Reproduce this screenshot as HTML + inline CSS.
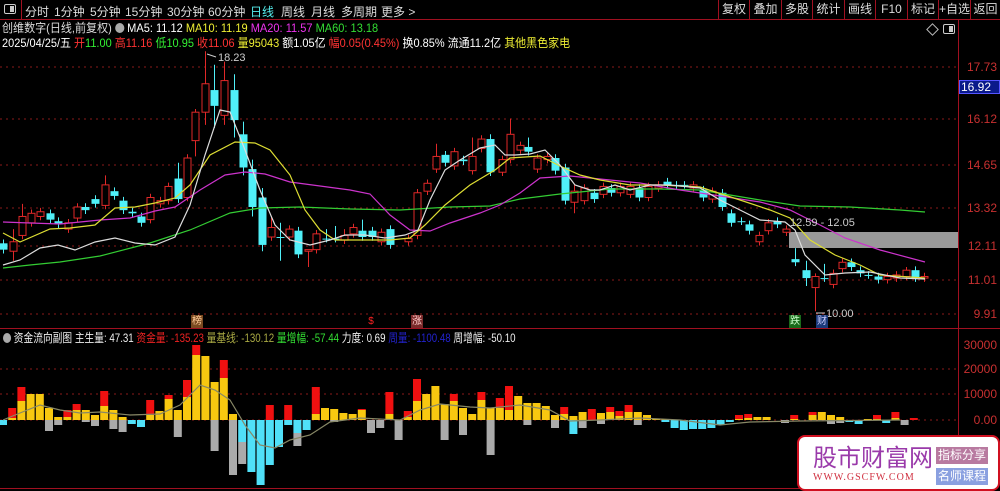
<!DOCTYPE html>
<html><head><meta charset="utf-8"><style>
*{margin:0;padding:0;box-sizing:border-box}
body{width:1000px;height:491px;background:#000;overflow:hidden;position:relative;font-family:"Liberation Sans","Noto Sans CJK SC",sans-serif;font-size:12px;color:#ddd}
.a{position:absolute;white-space:nowrap}
.tb span{position:absolute;top:3px;color:#ddd}
.btn{position:absolute;top:0;height:19px;border-left:1px solid #a01020;color:#ddd;text-align:center;line-height:19px;font-size:12px}
.ax{position:absolute;right:3px;color:#c83030;font-size:12px}
.mk{position:absolute;width:12px;height:13px;font-size:10px;line-height:13px;text-align:center;top:315px}
</style></head><body>
<div class="a" style="left:0;top:19px;width:1000px;height:1px;background:#a01020"></div>
<div class="a" style="left:21px;top:0;width:1px;height:19px;background:#a01020"></div>
<div class="a" style="left:4px;top:4px;width:12px;height:10px;border:1px solid #ccc;border-radius:2px"><div style="position:absolute;right:1px;top:1px;width:4px;height:6px;background:#ccc"></div></div>
<div class="tb">
<span style="left:25px">分时</span><span style="left:54px">1分钟</span><span style="left:90px">5分钟</span><span style="left:125px">15分钟</span><span style="left:167px">30分钟</span><span style="left:208px">60分钟</span><span style="left:250px;color:#5ee">日线</span><span style="left:281px">周线</span><span style="left:311px">月线</span><span style="left:341px">多周期</span><span style="left:381px">更多 &gt;</span>
</div>
<div class="btn" style="left:718px;width:31px">复权</div><div class="btn" style="left:749px;width:32px">叠加</div><div class="btn" style="left:781px;width:31px">多股</div><div class="btn" style="left:812px;width:32px">统计</div><div class="btn" style="left:844px;width:31px">画线</div><div class="btn" style="left:875px;width:32px">F10</div><div class="btn" style="left:907px;width:31px">标记</div><div class="btn" style="left:938px;width:32px">+自选</div><div class="btn" style="left:970px;width:30px">返回</div>

<div class="a" style="left:2px;top:19px;transform:scaleX(0.92);transform-origin:0 0">创维数字(日线,前复权) <span style="display:inline-block;width:10px;height:10px;border-radius:5px;background:#aaa;vertical-align:-1px"></span> <span style="color:#fff">MA5: 11.12</span> <span style="color:#ee3">MA10: 11.19</span> <span style="color:#e3e">MA20: 11.57</span> <span style="color:#3d3">MA60: 13.18</span></div>
<div class="a" style="left:2px;top:34px;color:#fff;transform:scaleX(0.915);transform-origin:0 0">2025/04/25/五 <span style="color:#f33">开</span><span style="color:#3e3">11.00</span> <span style="color:#f33">高11.16</span> <span style="color:#3e3">低10.95</span> <span style="color:#f33">收11.06</span> <span style="color:#ee3">量95043</span> 额1.05亿 <span style="color:#f33">幅0.05(0.45%)</span> 换0.85% 流通11.2亿 <span style="color:#ee3">其他黑色家电</span></div>
<div class="a" style="left:928px;top:25px;width:9px;height:9px;border:1px solid #bbb;transform:rotate(45deg)"></div>
<div class="a" style="left:943px;top:24px;width:12px;height:10px;border:1px solid #ccc;border-radius:2px"><div style="position:absolute;right:1px;top:1px;width:4px;height:6px;background:#ccc"></div></div>

<svg class="a" style="left:0;top:0" width="1000" height="491" id="s">
<g stroke="#8a1a1a" stroke-dasharray="2,4" stroke-width="1">
<line x1="0" y1="67" x2="958" y2="67"/><line x1="0" y1="119" x2="958" y2="119"/><line x1="0" y1="165" x2="958" y2="165"/><line x1="0" y1="208" x2="958" y2="208"/><line x1="0" y1="246" x2="958" y2="246"/><line x1="0" y1="280" x2="958" y2="280"/><line x1="0" y1="314" x2="958" y2="314"/>
<line x1="0" y1="369" x2="958" y2="369"/><line x1="0" y1="394" x2="958" y2="394"/><line x1="0" y1="420" x2="958" y2="420"/>
</g>
<line x1="958.5" y1="19" x2="958.5" y2="491" stroke="#a01020"/>
<line x1="0" y1="328.5" x2="1000" y2="328.5" stroke="#a01020"/>
<line x1="0" y1="488.5" x2="958" y2="488.5" stroke="#a01020"/>
<rect x="789" y="232" width="169" height="16" fill="#999"/>
<g id="sub"></g><g id="c"></g>
<g fill="none" stroke-width="1.2">
<polyline stroke="#3c3" points="3,268 30,265 60,262 100,256 150,243 190,230 230,213 260,208 300,207 350,209 400,210 450,207 490,206 520,199 560,194 610,189 660,189 700,190 760,200 800,206 850,207 900,210 925,212"/>
<polyline stroke="#c3c" points="3,222 30,223 60,224 100,220 130,218 155,211 175,207 200,190 225,175 245,172 265,174 290,182 320,186 350,190 370,194 390,215 410,230 430,231 450,223 480,213 500,205 520,193 540,178 570,176 610,180 640,183 680,190 720,196 760,202 790,210 820,225 845,238 880,250 925,262"/>
<polyline stroke="#dd3" points="3,233 20,242 50,229 70,228 95,225 115,208 135,207 155,203 175,198 190,185 210,155 235,142 255,143 270,150 290,175 305,210 320,230 335,240 360,240 390,240 410,238 425,225 445,205 470,185 495,170 510,158 540,156 560,166 580,175 600,180 630,185 660,185 700,187 740,200 770,210 790,218 810,240 835,255 860,265 880,275 925,278"/>
<polyline stroke="#ddd" points="3,265 20,260 40,248 58,245 75,250 95,242 115,238 135,243 155,245 175,237 190,205 205,155 220,110 230,112 245,150 260,190 275,225 290,240 310,245 330,240 345,235 365,235 385,238 405,235 418,230 430,200 445,170 460,160 480,148 495,145 505,155 515,155 530,154 545,150 560,165 575,185 590,190 600,190 615,185 630,190 650,185 670,185 700,188 720,200 740,210 760,220 785,222 795,230 805,255 825,275 845,273 870,272 900,278 925,279"/>
<polyline stroke="#886" points="3,420 20,413 40,405 60,410 80,413 100,412 130,415 160,414 180,405 200,385 215,390 230,400 245,425 260,445 275,448 290,440 310,435 330,422 360,418 400,420 420,410 440,404 470,407 490,408 520,405 550,410 570,421 600,420 640,418 680,420 720,425 750,422 800,421 900,420"/>
</g>
<g fill="#ccc" font-size="11" font-family="Liberation Sans">
<text x="218" y="61">18.23</text><text x="790" y="226">12.59 - 12.05</text><text x="826" y="317">10.00</text>
</g>
<line x1="207" y1="54" x2="216" y2="57" stroke="#ccc"/><line x1="816" y1="313" x2="825" y2="313" stroke="#ccc"/>
</svg>

<div class="ax" style="top:60px">17.73</div>
<div class="a" style="left:959px;top:80px;width:41px;height:14px;background:#0a1a8a;border:1px solid #55f;color:#fff;font-size:12px;line-height:12px;padding-left:1px">16.92</div>
<div class="ax" style="top:112px">16.12</div><div class="ax" style="top:158px">14.65</div><div class="ax" style="top:201px">13.32</div><div class="ax" style="top:239px">12.11</div><div class="ax" style="top:273px">11.01</div><div class="ax" style="top:307px">9.91</div>
<div class="ax" style="top:338px">30000</div><div class="ax" style="top:362px">20000</div><div class="ax" style="top:387px">10000</div><div class="ax" style="top:413px">0.00</div>

<div class="mk" style="left:191px;background:#7a4a20;color:#fc9">榜</div>
<div class="mk" style="left:365px;color:#f22">$</div>
<div class="mk" style="left:411px;background:#7a2a2a;color:#fcc">涨</div>
<div class="mk" style="left:789px;background:#1a6a1a;color:#cfc">跌</div>
<div class="mk" style="left:816px;background:#1a3a7a;color:#ccf">财</div>

<div class="a" style="left:3px;top:329px;color:#eee;font-size:12px;transform:scaleX(0.81);transform-origin:0 0"><span style="display:inline-block;width:10px;height:10px;border-radius:5px;background:#aaa;vertical-align:-1px"></span> 资金流向副图 主生量: 47.31 <span style="color:#e22">资金量: -135.23</span> <span style="color:#aa4">量基线: -130.12</span> <span style="color:#3d3">量增幅: -57.44</span> 力度: 0.69 <span style="color:#22c">周量: -1100.48</span> 周增幅: -50.10</div>

<div class="a" style="left:797px;top:435px;width:203px;height:56px;background:#fff;border:2px solid #d01020;border-radius:8px">
<div class="a" style="left:14px;top:5px;font-size:24px;color:#9a3aaa;font-family:'Noto Sans CJK SC',sans-serif;line-height:28px">股市财富网</div>
<div class="a" style="left:14px;top:35px;font-size:10px;color:#d03040;font-family:'Liberation Serif',serif;letter-spacing:1px">WWW.GSCFW.COM</div>
<div class="a" style="left:137px;top:10px;width:52px;height:17px;background:#b87aa0;color:#fff;font-size:12px;text-align:center;line-height:17px">指标分享</div>
<div class="a" style="left:137px;top:31px;width:52px;height:17px;background:#8aa0e0;color:#fff;font-size:12px;text-align:center;line-height:17px">名师课程</div>
</div>

<script>
var D=[[3,12.15,11.95],[13,11.9,12.2,12.6,11.6],[22,12.4,13.0,13.4],[31,12.8,13.1],[40,13.0,13.15],[50,13.1,12.9],[58,12.85,12.75],[68,12.6,12.8],[77,12.95,13.3],[85,13.3,13.2],[95,13.55,13.4],[105,13.35,14.0,14.3],[114,13.8,13.65],[123,13.5,13.2],[132,13.15,13.1],[141,13.0,12.8],[150,12.9,13.6],[160,13.4,13.5],[168,13.5,13.95],[178,14.2,13.55,14.7],[187,13.6,14.85],[195,15.4,16.3,16.4,14.9],[205,16.3,17.2,18.23,15.9],[214,17.0,16.5,17.8,15.8],[224,16.2,17.3,17.9,15.9],[234,17.0,16.05,17.5,15.5],[243,15.6,14.55,16.0,14.3],[252,14.5,13.3,14.8,13.0],[262,13.6,12.1,13.9,11.9],[271,12.35,12.65,13.0],[280,12.35,12.35,12.8,11.6],[289,12.35,12.6],[298,12.55,11.8],[308,11.9,11.95,11.95,11.4],[316,11.95,12.45],[326,12.3,12.3,12.6],[335,12.3,12.3,12.7],[344,12.25,12.4,12.6],[353,12.45,12.65],[362,12.55,12.35,12.9],[372,12.55,12.35],[381,12.2,12.5],[390,12.6,12.1],[408,12.2,12.3],[417,12.4,13.75],[427,13.8,14.05],[436,14.5,14.9,15.3],[445,14.95,14.7],[454,14.6,15.05],[463,14.8,14.75],[472,14.45,14.9,15.5],[481,15.15,15.45],[490,15.45,14.4,15.6],[502,14.4,14.8],[510,14.8,15.6,16.1],[520,15.1,15.25],[528,15.2,15.05,15.5],[537,14.5,14.85],[547,14.8,14.9],[555,14.85,14.45],[565,14.55,13.5],[574,13.45,13.8,14.0,13.1],[584,13.5,13.9],[594,13.75,13.55],[603,13.7,13.95],[611,13.9,13.75],[620,13.75,13.95],[630,13.7,13.95],[639,13.9,13.6],[648,13.6,13.95],[658,13.9,14.0],[667,14.1,14.0],[676,14.0,14.0],[684,14.0,14.0],[693,13.9,14.0],[703,13.85,13.6],[712,13.55,13.8],[722,13.75,13.3],[731,13.1,12.8],[741,12.85,12.85],[749,12.75,12.55],[759,12.2,12.4],[768,12.55,12.8],[777,12.85,12.75],[786,12.5,12.6],[795,11.65,11.55,12.0],[806,11.3,11.05,11.6,10.8],[815,10.75,11.1,11.2,10.0],[824,11.05,11.05,11.5],[833,10.85,11.2],[842,11.35,11.55],[851,11.55,11.4],[860,11.3,11.2],[868,11.15,11.15],[878,11.1,11.0],[887,11.0,11.1],[896,11.05,11.15],[906,11.1,11.3,11.4],[915,11.3,11.05],[924,11.05,11.1]];
function Y(p){return 67+(17.73-p)*31.6}
var s='';D.forEach(function(d){var x=d[0],o=d[1],c=d[2],hi=d[3]||Math.max(o,c)+0.12,lo=d[4]||Math.min(o,c)-0.12,up=c>o;var col=up?'#e02828':'#50f0f8';
s+='<line x1="'+(x+.5)+'" y1="'+Y(hi)+'" x2="'+(x+.5)+'" y2="'+Y(lo)+'" stroke="'+col+'"/>';
var t=Y(Math.max(o,c)),b=Y(Math.min(o,c)),h=Math.max(b-t,1);
if(up)s+='<rect x="'+(x-3)+'" y="'+t+'" width="7" height="'+h+'" fill="#000" stroke="'+col+'"/>';else s+='<rect x="'+(x-3.5)+'" y="'+t+'" width="8" height="'+h+'" fill="'+col+'"/>';});
document.getElementById('c').innerHTML=s;
var B=[[0,0,-5,1],[2,12],[19,33],[26],[26],[12,0,-11],[3,0,-5],[3,10],[10,16],[10,0,-2],[5,0,-6],[14,29],[10,0,-9],[3,0,-12],[0,0,-4,1],[0,0,-7,1],[5,20],[9],[21,25],[10,0,-17],[23,40],[65,75],[64],[38,0,-31],[42,60],[6,0,-55],[0,0,-44,2],[0,0,-52,1],[0,0,-65,1],[0,15,-45,1],[0,0,-27,1],[0,15,-5,1],[0,0,-26,2],[0,0,-10,1],[6,33],[12],[11,0,-2],[7],[6],[10,11],[0,0,-13],[0,0,-8],[6,28],[0,0,-20],[3,9],[19,41],[26],[34],[16,0,-20],[19,26],[12,0,-15],[6],[20,28],[12,0,-35],[12,22],[10,34],[24],[17,0,-5],[17],[14],[5,0,-8],[6,13],[4,0,-14,1],[8,0,-8],[0,11],[7,0,-4],[8,13],[4,9],[8,15],[8,0,-5],[5],[1],[1,0,-2,1],[0,0,-8,1],[0,0,-10,1],[0,0,-9,1],[0,0,-9,1],[0,0,-8,1],[0,0,-5,1],[0,0,-2,1],[1,5],[2,6],[3],[3],[0],[0,0,-3],[1,5],[0],[5,8],[8],[5,0,-4],[3,0,-3],[0,0,-2,1],[0,0,-4,1],[1],[1,5],[0,0,-3,1],[2,8],[0,0,-5],[0,2]];
var g='';B.forEach(function(b,i){var x=3+i*9.2-4,yl=b[0]||0,r=b[1]||0,n=b[2]||0,nc=b[3]||0;
if(r>yl)g+='<rect x="'+x+'" y="'+(420-r)+'" width="8" height="'+(r-yl)+'" fill="#f01010"/>';
if(yl>0)g+='<rect x="'+x+'" y="'+(420-yl)+'" width="8" height="'+yl+'" fill="#f8c810"/>';
if(n<0){if(nc==2){g+='<rect x="'+x+'" y="420" width="8" height="'+(-n*0.5)+'" fill="#50e0f8"/><rect x="'+x+'" y="'+(420-n*0.5)+'" width="8" height="'+(-n*0.5)+'" fill="#aaa"/>';}
else g+='<rect x="'+x+'" y="420" width="8" height="'+(-n)+'" fill="'+(nc==1?'#50e0f8':'#aaa')+'"/>';}});
document.getElementById('sub').innerHTML=g;
</script>
</body></html>
